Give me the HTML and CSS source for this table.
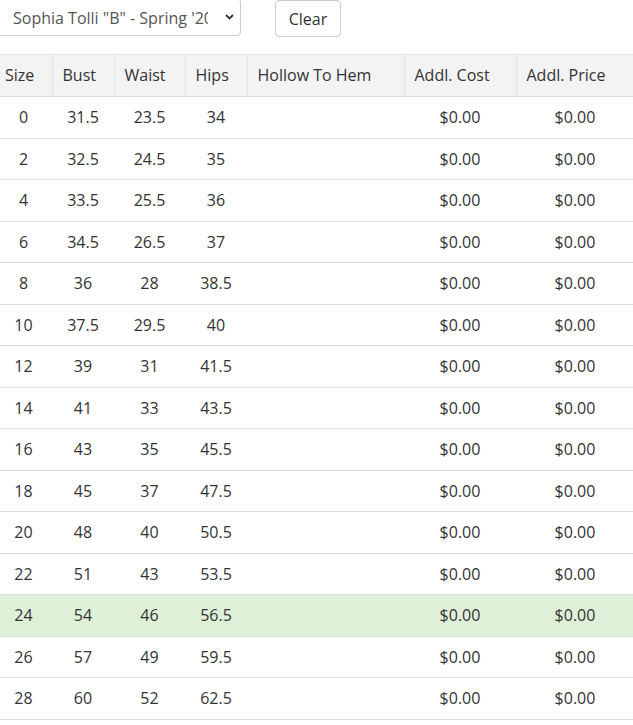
FILE: index.html
```html
<!DOCTYPE html>
<html>
<head>
<meta charset="utf-8">
<link rel="stylesheet" href="styles.css">
</head>
<body>
<div class="page">
  <div class="toolbar">
    <div class="select">
      <span class="select-text">Sophia Tolli "B" - Spring '20</span>
      <svg class="chev" width="9" height="6" viewBox="0 0 9 6"><path d="M1 1 L4.5 4.5 L8 1" fill="none" stroke="#333" stroke-width="1.8"/></svg>
    </div>
    <button class="btn">Clear</button>
  </div>
  <table class="sizes">
    <colgroup>
      <col style="width:57px"><col style="width:62px"><col style="width:71px"><col style="width:62px"><col style="width:157px"><col style="width:112px"><col style="width:118px">
    </colgroup>
    <thead>
      <tr><th>Size</th><th>Bust</th><th>Waist</th><th>Hips</th><th>Hollow To Hem</th><th>Addl. Cost</th><th>Addl. Price</th></tr>
    </thead>
    <tbody>
      <tr><td>0</td><td>31.5</td><td>23.5</td><td>34</td><td></td><td>$0.00</td><td>$0.00</td></tr>
      <tr><td>2</td><td>32.5</td><td>24.5</td><td>35</td><td></td><td>$0.00</td><td>$0.00</td></tr>
      <tr><td>4</td><td>33.5</td><td>25.5</td><td>36</td><td></td><td>$0.00</td><td>$0.00</td></tr>
      <tr><td>6</td><td>34.5</td><td>26.5</td><td>37</td><td></td><td>$0.00</td><td>$0.00</td></tr>
      <tr><td>8</td><td>36</td><td>28</td><td>38.5</td><td></td><td>$0.00</td><td>$0.00</td></tr>
      <tr><td>10</td><td>37.5</td><td>29.5</td><td>40</td><td></td><td>$0.00</td><td>$0.00</td></tr>
      <tr><td>12</td><td>39</td><td>31</td><td>41.5</td><td></td><td>$0.00</td><td>$0.00</td></tr>
      <tr><td>14</td><td>41</td><td>33</td><td>43.5</td><td></td><td>$0.00</td><td>$0.00</td></tr>
      <tr><td>16</td><td>43</td><td>35</td><td>45.5</td><td></td><td>$0.00</td><td>$0.00</td></tr>
      <tr><td>18</td><td>45</td><td>37</td><td>47.5</td><td></td><td>$0.00</td><td>$0.00</td></tr>
      <tr><td>20</td><td>48</td><td>40</td><td>50.5</td><td></td><td>$0.00</td><td>$0.00</td></tr>
      <tr><td>22</td><td>51</td><td>43</td><td>53.5</td><td></td><td>$0.00</td><td>$0.00</td></tr>
      <tr class="selected"><td>24</td><td>54</td><td>46</td><td>56.5</td><td></td><td>$0.00</td><td>$0.00</td></tr>
      <tr><td>26</td><td>57</td><td>49</td><td>59.5</td><td></td><td>$0.00</td><td>$0.00</td></tr>
      <tr><td>28</td><td>60</td><td>52</td><td>62.5</td><td></td><td>$0.00</td><td>$0.00</td></tr>
    </tbody>
  </table>
</div>
</body>
</html>
```

FILE: styles.css
```css
html, body {
  margin: 0;
  padding: 0;
  background: #fff;
  overflow: hidden;
}
body {
  font-family: "Open Sans", "Noto Sans", sans-serif;
  font-size: 16px;
  color: #333;
}
.page {
  margin-left: -5px;
  width: 639px;
}
.toolbar {
  display: flex;
  align-items: flex-end;
  gap: 34px;
  margin-top: -2px;
}
.select {
  box-sizing: border-box;
  width: 246px;
  height: 38px;
  border: 1px solid #ccc;
  border-radius: 4px;
  display: flex;
  align-items: center;
  padding-left: 17px;
  padding-right: 6px;
  overflow: hidden;
  background: #fff;
}
.select-text {
  flex: none;
  width: 195px;
  white-space: nowrap;
  overflow: hidden;
  color: #555;
  line-height: 22px;
  padding-top: 1px;
}
.chev {
  flex: none;
  margin-left: auto;
}
.btn {
  box-sizing: border-box;
  height: 37px;
  width: 66px;
  border: 1px solid #ccc;
  border-radius: 4px;
  background: #fff;
  font-family: inherit;
  font-size: 16px;
  color: #333;
  padding: 0;
  margin-bottom: -1px;
}
.sizes {
  margin-top: 18px;
  border-collapse: collapse;
  table-layout: fixed;
  width: 639px;
}
.sizes th {
  background: #f3f3f3;
  font-weight: normal;
  text-align: left;
  padding: 9px 10px 10px 10px;
  line-height: 22px;
  border-top: 1px solid #e3e3e3;
  border-bottom: 1px solid #dedede;
  border-left: 1px solid #e3e3e3;
  white-space: nowrap;
}
.sizes th:first-child {
  border-left: none;
}
.sizes td {
  text-align: center;
  padding: 9px 10px;
  line-height: 22.5px;
  border-bottom: 1px solid #dedede;
}
.sizes tr.selected td {
  background: #dff0d8;
}
```
